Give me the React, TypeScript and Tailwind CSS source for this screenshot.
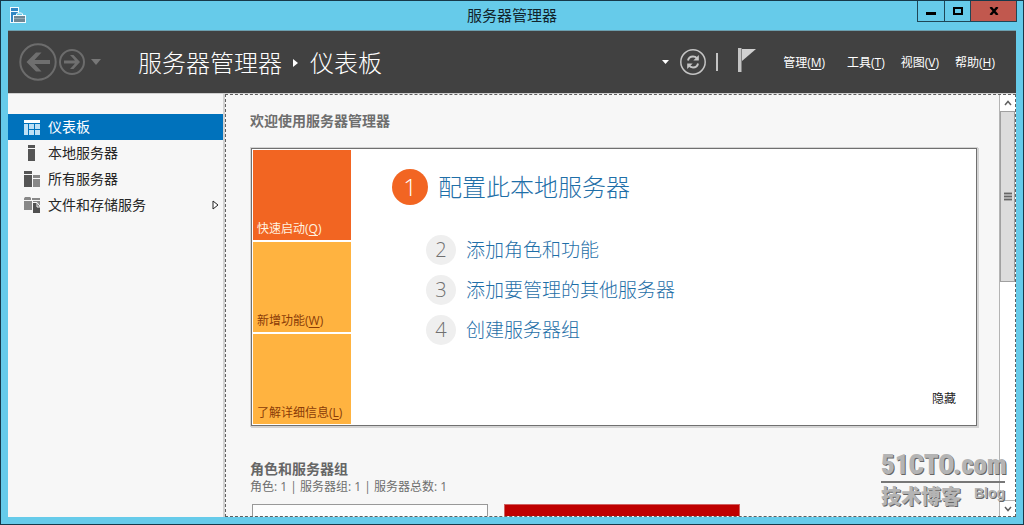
import type { ReactNode } from 'react';

const menus = [
  { label: '管理', hotkey: 'M', className: 'mr-[22px]' },
  { label: '工具', hotkey: 'T', className: 'mr-4' },
  { label: '视图', hotkey: 'V', className: 'mr-4' },
  { label: '帮助', hotkey: 'H', className: '' },
];

const tiles = [
  { label: '快速启动', hotkey: 'Q', className: 'bg-[#f26522] text-[#fff3e0]' },
  { label: '新增功能', hotkey: 'W', className: 'bg-[#ffb340] text-[#8a3c08]' },
  { label: '了解详细信息', hotkey: 'L', className: 'bg-[#ffb340] text-[#8a3c08]' },
];

const steps = [
  { num: 2, label: '添加角色和功能' },
  { num: 3, label: '添加要管理的其他服务器' },
  { num: 4, label: '创建服务器组' },
];

function Hotkey({ label, hotkey }: { label: string; hotkey: string }) {
  return (
    <span className="whitespace-nowrap">
      {label}(<span className="underline underline-offset-2">{hotkey}</span>)
    </span>
  );
}

function AppIcon() {
  return (
    <svg width="17" height="17" viewBox="0 0 17 17" aria-hidden="true">
      <rect x="0.5" y="0.5" width="8" height="15" fill="#2f86c4" stroke="#f4fbff" />
      <path d="M1 4.500h7" stroke="#f4fbff" />
      <path d="M6.500 9V7l1-1h4l1 1v2" fill="#66cbea" stroke="#f4fbff" />
      <rect x="3.500" y="8.500" width="12" height="7" fill="#6f8794" stroke="#f4fbff" />
      <path d="M4 11.500h11" stroke="#93a8b3" />
    </svg>
  );
}

function BackIcon() {
  return (
    <svg width="38" height="38" viewBox="0 0 38 38" aria-hidden="true">
      <circle cx="19" cy="19" r="17.700" fill="none" stroke="#6c6c6c" strokeWidth="2" />
      <path d="M7.500 19 17 9.500h5.500L15.500 17H31v4H15.500l7 7.500H17z" fill="#6f6f6f" />
    </svg>
  );
}

function ForwardIcon() {
  return (
    <svg width="26" height="26" viewBox="0 0 26 26" aria-hidden="true">
      <circle cx="13" cy="13" r="12" fill="none" stroke="#6c6c6c" strokeWidth="2" />
      <path d="M21 13l-6.500 7H11l5-5.500H5v-3h11L11 6h3.500z" fill="#6f6f6f" />
    </svg>
  );
}

function RefreshIcon() {
  return (
    <svg width="26" height="26" viewBox="0 0 26 26" fill="none" aria-hidden="true">
      <circle cx="13" cy="13" r="12.200" stroke="#c4c4c4" strokeWidth="1.500" />
      <path d="M8 11.500c.5-2.500 2.500-4 5-4 1.700 0 3 .6 4 1.800" stroke="#c4c4c4" strokeWidth="2" />
      <path d="M18.800 6v5.500h-5.500z" fill="#c4c4c4" />
      <path d="M18 14.500c-.5 2.500-2.500 4-5 4-1.700 0-3-.6-4-1.800" stroke="#c4c4c4" strokeWidth="2" />
      <path d="M7.200 20v-5.500h5.500z" fill="#c4c4c4" />
    </svg>
  );
}

function FlagIcon() {
  return (
    <svg width="18" height="24" viewBox="0 0 18 24" aria-hidden="true">
      <path d="M0 0h3.500v24H0z" fill="#c4c4c4" />
      <path d="M4 1h14L4 13z" fill="#d0d0d0" />
    </svg>
  );
}

function DashboardIcon() {
  return (
    <svg width="16" height="16" viewBox="0 0 16 16" aria-hidden="true">
      <path d="M0 1h16v3H0z" fill="#fff" />
      <path d="M0 5h4v11H0zM5 5h5v5H5zM11 5h5v5h-5zM5 11h5v5H5zM11 11h5v5h-5z" fill="#bfe0f5" />
    </svg>
  );
}

function ServerIcon() {
  return (
    <svg width="16" height="16" viewBox="0 0 16 16" aria-hidden="true">
      <path d="M4 0h7v3H4zM4 4h7v12H4z" fill="#555" />
    </svg>
  );
}

function ServersIcon() {
  return (
    <svg width="16" height="16" viewBox="0 0 16 16" aria-hidden="true">
      <path d="M0 0h8v3H0zM0 4h8v12H0z" fill="#555" />
      <path d="M9 4h7v3H9zM9 8h7v8H9z" fill="#888" />
    </svg>
  );
}

function StorageIcon() {
  return (
    <svg width="17" height="16" viewBox="0 0 17 16" aria-hidden="true">
      <path d="M0 1.500 1 0h5l1 1v2H0zM0 4h8v9H0zM8 1h8v2H8z" fill="#888" />
      <path d="M9 4h7v4H9z" fill="#888" />
      <path d="M9 6h4l3 4v6H9z" fill="#505050" />
      <path d="M8.500 16V5.500H13l3.500 4.500H13V6" fill="none" stroke="#f7f7f7" />
    </svg>
  );
}

const navItems: { label: string; icon: ReactNode; active?: boolean; expandable?: boolean }[] = [
  { label: '仪表板', icon: <DashboardIcon />, active: true },
  { label: '本地服务器', icon: <ServerIcon /> },
  { label: '所有服务器', icon: <ServersIcon /> },
  { label: '文件和存储服务', icon: <StorageIcon />, expandable: true },
];

function TitleBar() {
  return (
    <div className="flex h-[29px] shrink-0 items-start">
      <div className="flex flex-1 px-1.5 pt-1.5">
        <span className="ml-[3px]">
          <AppIcon />
        </span>
      </div>
      <div className="pt-1 text-[15px] leading-5 text-[#12242c]">服务器管理器</div>
      <div className="flex flex-1 justify-end px-1.5">
        <div className="flex h-[21px] border border-t-0 border-[#1f4656]">
          <button aria-label="最小化" className="flex w-[27px] items-center justify-center border-r border-[#1f4656]">
            <span className="mt-1 h-[3px] w-2.5 bg-black" />
          </button>
          <button aria-label="最大化" className="flex w-[26px] items-center justify-center border-r border-[#1f4656]">
            <span className="h-2 w-2.5 border-2 border-black" />
          </button>
          <button aria-label="关闭" className="flex w-[45px] items-center justify-center bg-[#c1584e]">
            <svg width="10" height="8" viewBox="0 0 10 8" aria-hidden="true">
              <path d="M1.500 0 8.500 8M8.500 0 1.500 8" stroke="#000" strokeWidth="2.400" />
            </svg>
          </button>
        </div>
      </div>
    </div>
  );
}

function Header() {
  return (
    <header className="flex h-[63px] shrink-0 items-center border-t border-[#6c9fae] bg-[#414141] pr-[21px] pl-[11px] text-white">
      <button aria-label="后退">
        <BackIcon />
      </button>
      <button aria-label="前进" className="ml-0.5">
        <ForwardIcon />
      </button>
      <button aria-label="历史记录" className="ml-1.5">
        <svg width="10" height="6" viewBox="0 0 10 6" aria-hidden="true">
          <path d="M0 0h10L5 6z" fill="#777" />
        </svg>
      </button>
      <h1 className="ml-[37px] flex items-center pt-0.5 text-2xl font-light">
        服务器管理器
        <svg width="6" height="8" viewBox="0 0 6 8" className="mx-[11px]" aria-hidden="true">
          <path d="M0 0l5 4-5 4z" fill="#fff" />
        </svg>
        仪表板
      </h1>
      <div className="ml-auto flex items-center">
        <button aria-label="刷新选项">
          <svg width="8" height="4" viewBox="0 0 8 4" aria-hidden="true">
            <path d="M0 0h7L3.500 4z" fill="#fff" />
          </svg>
        </button>
        <button aria-label="刷新" className="ml-2.5">
          <RefreshIcon />
        </button>
        <span className="ml-2.5 h-[18px] w-0.5 bg-[#c4c4c4]" />
        <button aria-label="通知" className="mr-[27px] ml-5 -mt-1">
          <FlagIcon />
        </button>
        <nav className="flex pt-0.5 text-xs">
          {menus.map((menu) => (
            <button key={menu.hotkey} className={menu.className}>
              <Hotkey label={menu.label} hotkey={menu.hotkey} />
            </button>
          ))}
        </nav>
      </div>
    </header>
  );
}

function Sidebar() {
  return (
    <nav className="w-[217px] shrink-0 border-r-2 border-[#d2d2d2] pt-5">
      {navItems.map((item) => (
        <a
          key={item.label}
          href="#"
          className={`flex h-[26px] items-center pr-1 pl-4 text-sm ${item.active ? 'bg-[#0072bc] text-white' : 'text-[#262626]'}`}
        >
          <span className="mr-2 w-4">{item.icon}</span>
          {item.label}
          {item.expandable && (
            <svg width="7" height="10" viewBox="0 0 7 10" className="ml-auto" aria-hidden="true">
              <path d="M1 1l5 4-5 4z" fill="#fff" stroke="#222" />
            </svg>
          )}
        </a>
      ))}
    </nav>
  );
}

function WelcomePanel() {
  return (
    <section className="mt-[17px] border border-[#707070] bg-white p-px shadow-[0_0_0_1px_#d4d4d4,1px_1px_0_1px_#d4d4d4]">
      <div className="flex">
        <div className="flex w-[98px] shrink-0 flex-col gap-0.5">
          {tiles.map((tile) => (
            <button key={tile.hotkey} className={`flex h-[90px] items-end px-1 pb-0.5 text-xs leading-[18px] ${tile.className}`}>
              <Hotkey label={tile.label} hotkey={tile.hotkey} />
            </button>
          ))}
        </div>
        <div className="flex flex-1 flex-col pt-[19px] pl-[41px] font-light">
          <a href="#" className="flex items-center text-2xl text-[#1f6fa8]">
            <span className="mr-2.5 flex size-9 items-center justify-center rounded-full bg-[#f26522] text-white">1</span>
            配置此本地服务器
          </a>
          <ol className="mt-[30px] flex flex-col gap-2.5 pl-[34px]">
            {steps.map((step) => (
              <li key={step.num}>
                <a href="#" className="flex h-[30px] items-center text-[19px] text-[#1f6fa8]">
                  <span className="mr-2.5 flex size-[30px] items-center justify-center rounded-full bg-[#efefef] text-xl text-[#707070]">
                    {step.num}
                  </span>
                  {step.label}
                </a>
              </li>
            ))}
          </ol>
          <button className="mt-auto mr-[19px] mb-4 self-end text-xs font-normal leading-[18px] text-[#222]">隐藏</button>
        </div>
      </div>
    </section>
  );
}

function ScrollBar() {
  return (
    <div className="flex w-4 shrink-0 flex-col border-l border-[#b4b4b4] bg-white">
      <button aria-label="向上滚动" className="flex h-4 items-center justify-center">
        <svg width="8" height="6" viewBox="0 0 8 6" aria-hidden="true">
          <path d="M1 5l3-3.500L7 5" fill="none" stroke="#606060" strokeWidth="1.500" />
        </svg>
      </button>
      <div className="flex-1">
        <div className="flex h-[44%] items-center justify-center border border-[#a0a0a0] bg-[#dcdcdc]">
          <svg width="8" height="9" viewBox="0 0 8 9" aria-hidden="true">
            <path d="M0 0h8v9H0z" fill="#aaa" />
            <path d="M0 1.500h8M0 4.500h8M0 7.500h8" stroke="#666" />
          </svg>
        </div>
      </div>
      <button aria-label="向下滚动" className="flex h-4 items-center justify-center border-t border-[#b4b4b4]">
        <svg width="8" height="6" viewBox="0 0 8 6" aria-hidden="true">
          <path d="M1 1l3 3.500L7 1" fill="none" stroke="#606060" strokeWidth="1.500" />
        </svg>
      </button>
    </div>
  );
}

function Watermark() {
  return (
    <div className="absolute right-[18px] bottom-[13px] w-[124px] font-black text-[#b4b4b4] [text-shadow:1px_1px_0_#666]">
      <div className="border-b-2 border-[#777] pb-0.5 font-['Roboto_Condensed','Liberation_Sans',sans-serif] text-[27px] leading-7">
        51CTO.com
      </div>
      <div className="flex justify-between">
        <span className="text-xl leading-7">技术博客</span>
        <span className="font-['Liberation_Sans',sans-serif] text-sm leading-5">Blog</span>
      </div>
    </div>
  );
}

export default function App() {
  return (
    <div className="relative flex h-screen flex-col overflow-hidden border border-[#16394a] bg-[#66cbea] px-[7px] pb-[7px] font-['Open_Sans','Noto_Sans_CJK_SC',sans-serif]">
      <div className="-mx-[7px]">
        <TitleBar />
      </div>
      <Header />
      <div className="flex min-h-0 flex-1 border-t border-[#d0d0d0] bg-[#f7f7f7]">
        <Sidebar />
        <div className="flex min-w-0 flex-1 border border-dashed border-[#606060]">
          <main className="min-w-0 flex-1 overflow-hidden pt-4 pr-[22px] pl-[25px]">
            <h2 className="-ml-px text-sm font-bold leading-5 text-[#6e6e6e]">欢迎使用服务器管理器</h2>
            <WelcomePanel />
            <h2 className="mt-[33px] -ml-px text-sm font-bold leading-5 text-[#666]">角色和服务器组</h2>
            <p className="-ml-px text-xs leading-4 text-[#6e6e6e]">角色: 1 | 服务器组: 1 | 服务器总数: 1</p>
            <div className="mt-[9px] ml-px flex gap-4">
              <div className="h-24 w-[236px] border border-[#999] bg-[#fdfdfd]" />
              <div className="h-24 w-[236px] border border-[#d06060] bg-[#bf0000]" />
            </div>
          </main>
          <ScrollBar />
        </div>
      </div>
      <Watermark />
    </div>
  );
}
